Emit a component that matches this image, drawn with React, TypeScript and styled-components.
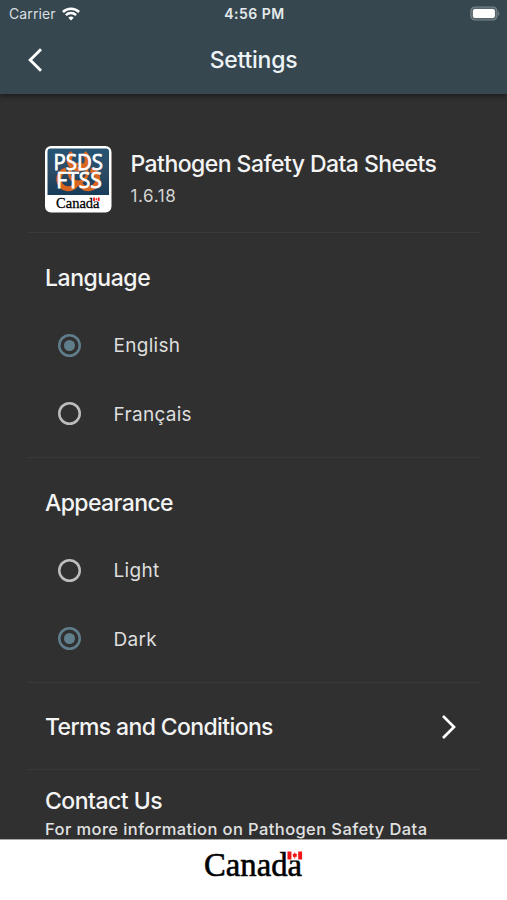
import React, { useState } from "react";
import styled, { createGlobalStyle } from "styled-components";

const GlobalStyle = createGlobalStyle`
  *, *::before, *::after { box-sizing: border-box; }
  body {
    margin: 0;
    background: #303030;
    font-family: Inter, "Liberation Sans", sans-serif;
    -webkit-font-smoothing: antialiased;
  }
`;

const Screen = styled.div`
  height: 900px;
  width: 100%;
  display: flex;
  flex-direction: column;
  overflow: hidden;
  background: #303030;
  color: #f4f4f4;
`;

const Header = styled.header`
  flex: none;
  height: 94px;
  background: #37474f;
  box-shadow: 0 2px 5px rgba(0, 0, 0, 0.45);
  z-index: 1;
`;

const StatusBar = styled.div`
  height: 27px;
  padding: 0 7px 0 9px;
  display: grid;
  grid-template-columns: 1fr auto 1fr;
  align-items: center;
`;

const Carrier = styled.div`
  display: flex;
  align-items: center;
  gap: 6px;
  font-size: 14px;
  letter-spacing: 0.1px;
  color: #d8dfe2;
`;

const Clock = styled.div`
  font-size: 14px;
  font-weight: 600;
  letter-spacing: 0.5px;
  color: #e6ebed;
`;

const BatteryIcon = styled.svg`
  justify-self: end;
  display: block;
`;

const NavBar = styled.div`
  height: 66px;
  padding: 0 22px;
  display: grid;
  grid-template-columns: 28px 1fr 28px;
  align-items: center;
`;

const IconButton = styled.button`
  border: 0;
  padding: 0;
  background: none;
  color: #fff;
  display: flex;
  width: 28px;
  height: 28px;
`;

const Title = styled.h1`
  margin: 0;
  text-align: center;
  font-size: 23px;
  line-height: 30px;
  font-weight: 500;
  letter-spacing: -0.25px;
  color: #edf4f7;
`;

const Content = styled.main`
  flex: 1;
  min-height: 0;
  overflow: hidden;
  padding: 0 27px;
`;

const Block = styled.section<{ $height?: number }>`
  height: ${(p) => (p.$height ? `${p.$height}px` : "auto")};
  border-bottom: 1px solid #393939;
  padding: 0 18px;
`;

const AppBlock = styled(Block)`
  display: flex;
  gap: 18.5px;
  padding-top: 52px;
`;

const AppText = styled.div`
  display: flex;
  flex-direction: column;
  padding-top: 3px;
`;

const Heading = styled.h2<{ $spacing: number }>`
  margin: 0;
  font-size: 23px;
  line-height: 30px;
  font-weight: 500;
  letter-spacing: ${(p) => p.$spacing}px;
  white-space: nowrap;
`;

const Version = styled.div`
  font-size: 17px;
  line-height: 22px;
  margin-top: 6px;
  letter-spacing: 0.6px;
  color: #d4d4d4;
`;

const GroupHeading = styled(Heading)`
  padding: 30px 0 18px;
`;

const Option = styled.label`
  height: 68.5px;
  display: flex;
  align-items: center;
  gap: 32.5px;
  padding-left: 13px;
`;

const HiddenRadio = styled.input`
  appearance: none;
  width: 0;
  height: 0;
  margin: 0 -32.5px 0 0;
`;

const RadioRing = styled.span<{ $on: boolean }>`
  width: 23px;
  height: 23px;
  border-radius: 50%;
  box-shadow: inset 0 0 0 2.5px ${(p) => (p.$on ? "#607d8b" : "#bdbdbd")};
  display: grid;
  place-items: center;
  &::after {
    content: "";
    width: 11px;
    height: 11px;
    border-radius: 50%;
    background: ${(p) => (p.$on ? "#607d8b" : "transparent")};
  }
`;

const OptionText = styled.span`
  font-size: 19px;
  line-height: 26px;
  padding-top: 2px;
  letter-spacing: 0.3px;
  color: #dedede;
`;

const LinkBlock = styled(Block)`
  display: flex;
  align-items: center;
  justify-content: space-between;
  padding: 2px 23px 0 18px;
`;

const ContactBlock = styled.section`
  padding: 16px 18px 0;
`;

const ContactText = styled.p`
  margin: 2px 0 0;
  font-size: 16.5px;
  line-height: 22px;
  font-weight: 500;
  letter-spacing: 0.4px;
  white-space: nowrap;
  color: #e2e2e2;
`;

const Footer = styled.footer`
  flex: none;
  height: 61px;
  border-top: 1px solid #a8a8a8;
  background: #fff;
  display: flex;
  justify-content: center;
  padding-top: 2px;
`;

const Wordmark = styled.svg`
  display: block;
  font-family: "Liberation Serif", serif;
`;

const AppIcon = styled.svg`
  flex: none;
  display: block;
`;

function CanadaMark() {
  return (
    <>
      <text x="0" y="24.500" fontSize="34" textLength="98" lengthAdjust="spacingAndGlyphs" fill="#000" stroke="#000" strokeWidth="0.6">
        Canada
      </text>
      <path d="M82.600 0H99v9.400H82.600z" fill="#fff" />
      <g fill="#f21414">
        <path d="M83.500.6h3.900v7.800h-3.900zM94.200.6h3.900v7.800h-3.900z" />
        <path d="m90.800 1.300 1 1.600 1.500.3-.7 1.400.2 1.400-1.500-.2v1.600h-1V5.800l-1.500.2.200-1.400-.7-1.400 1.500-.3z" />
      </g>
    </>
  );
}

function PsdsIcon() {
  return (
    <AppIcon width="67" height="67" viewBox="0 0 67 67">
      <defs>
        <linearGradient id="tile" x1="0" y1="0" x2="0" y2="1">
          <stop offset="0" stopColor="#255475" />
          <stop offset="0.5" stopColor="#2c4b65" />
          <stop offset="1" stopColor="#173c59" />
        </linearGradient>
      </defs>
      <rect width="66.500" height="66.500" rx="6" fill="#fff" />
      <path d="M2.500 5.500a3 3 0 0 1 3-3H61a3 3 0 0 1 3 3v43.500H2.500z" fill="url(#tile)" />
      <g fill="none" stroke="#d9651f" strokeWidth="5">
        <path d="M27.500 7a9 9 0 1 0 11.500 0" />
        <path d="M21 24a9.500 9.500 0 1 0 11.500 11" />
        <path d="M45.500 24a9.500 9.500 0 1 1-11.500 11" />
        <circle cx="33.300" cy="27" r="9" strokeWidth="3" />
      </g>
      <g fill="#fff" stroke="#fff" strokeWidth="0.75" fontFamily="'Open Sans', 'Noto Sans', sans-serif" fontWeight="400" fontSize="21">
        <text x="8.500" y="23.600" textLength="49.500" lengthAdjust="spacingAndGlyphs">PSDS</text>
        <text x="11.300" y="42.200" textLength="45.500" lengthAdjust="spacingAndGlyphs">FTSS</text>
      </g>
      <svg x="11" y="48.500" width="44" height="17" viewBox="0 -6 99 38" fontFamily="'Liberation Serif', serif">
        <CanadaMark />
      </svg>
    </AppIcon>
  );
}

function WifiIcon() {
  return (
    <svg width="18" height="14" viewBox="0 0 18 14" fill="none" stroke="#fff" strokeWidth="2.5">
      <path d="M.9 5a11.600 11.600 0 0 1 16.200 0" />
      <path d="M3.900 8.200a7.300 7.300 0 0 1 10.200 0" />
      <path d="M9 13.600 6.300 10.800a3.800 3.800 0 0 1 5.400 0z" fill="#fff" stroke="none" />
    </svg>
  );
}

interface Choice {
  value: string;
  options: string[];
  name: string;
  spacing: number;
}

function ChoiceGroup({ name, value, options, spacing }: Choice) {
  const [selected, setSelected] = useState(value);
  return (
    <Block $height={225}>
      <GroupHeading $spacing={spacing}>{name}</GroupHeading>
      {options.map((option) => (
        <Option key={option}>
          <HiddenRadio
            type="radio"
            name={name}
            checked={selected === option}
            onChange={() => setSelected(option)}
          />
          <RadioRing $on={selected === option} />
          <OptionText>{option}</OptionText>
        </Option>
      ))}
    </Block>
  );
}

export default function App() {
  return (
    <Screen>
      <GlobalStyle />
      <Header>
        <StatusBar>
          <Carrier>
            <span>Carrier</span>
            <WifiIcon />
          </Carrier>
          <Clock>4:56 PM</Clock>
          <BatteryIcon width="30" height="15" viewBox="0 0 30 15">
            <rect x="0.900" y="1" width="26" height="13" rx="4" fill="#56656b" stroke="#78858a" strokeWidth="1.200" />
            <rect x="2.900" y="3" width="22" height="9" rx="2" fill="#fff" />
            <path d="M28.300 5v5q2-2.500 0-5" fill="#889297" />
          </BatteryIcon>
        </StatusBar>
        <NavBar>
          <IconButton aria-label="Back">
            <svg width="28" height="28" viewBox="0 0 28 28" fill="none" stroke="currentColor" strokeWidth="2.900">
              <path d="M19 3.300 8.200 14 19 24.700" />
            </svg>
          </IconButton>
          <Title>Settings</Title>
        </NavBar>
      </Header>
      <Content>
        <AppBlock $height={139}>
          <PsdsIcon />
          <AppText>
            <Heading $spacing={-0.55}>Pathogen Safety Data Sheets</Heading>
            <Version>1.6.18</Version>
          </AppText>
        </AppBlock>
        <ChoiceGroup name="Language" value="English" options={["English", "Français"]} spacing={-0.45} />
        <ChoiceGroup name="Appearance" value="Dark" options={["Light", "Dark"]} spacing={-0.6} />
        <LinkBlock $height={87}>
          <Heading $spacing={-0.63}>Terms and Conditions</Heading>
          <IconButton aria-label="Open">
            <svg width="28" height="28" viewBox="0 0 28 28" fill="none" stroke="currentColor" strokeWidth="2.700">
              <path d="M14 3 25 14 14 25" />
            </svg>
          </IconButton>
        </LinkBlock>
        <ContactBlock>
          <Heading $spacing={-0.5}>Contact Us</Heading>
          <ContactText>For more information on Pathogen Safety Data</ContactText>
        </ContactBlock>
      </Content>
      <Footer>
        <Wordmark width="103" height="44" viewBox="-2 -9 103 44">
          <CanadaMark />
        </Wordmark>
      </Footer>
    </Screen>
  );
}
